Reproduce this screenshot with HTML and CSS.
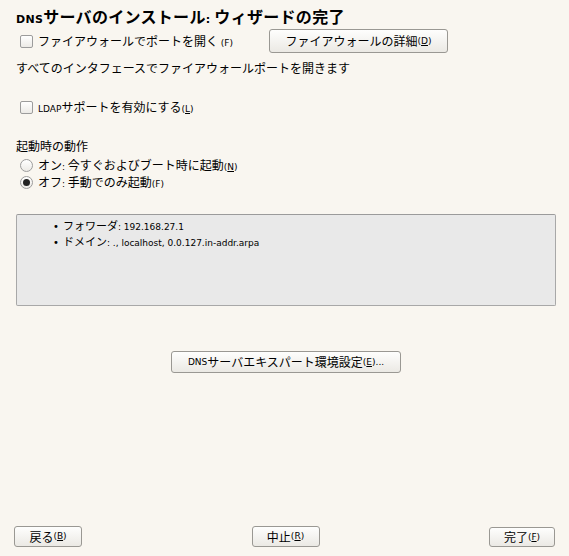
FILE: index.html
```html
<!DOCTYPE html>
<html lang="ja">
<head>
<meta charset="utf-8">
<title>DNSサーバのインストール</title>
<link rel="stylesheet" href="styles.css">
</head>
<body>
<div class="page">
  <h1 class="title"><span class="lat-b">DNS</span>サーバのインストール<span class="lat-b">:</span> ウィザードの完了</h1>

  <div class="row fw-row">
    <label class="check-label">
      <span class="checkbox"></span>
      <span>ファイアウォールでポートを開く <span class="lat">(F)</span></span>
    </label>
    <button class="btn fw-btn">ファイアウォールの詳細 <span class="lat">(<u>D</u>)</span></button>
  </div>

  <p class="note">すべてのインタフェースでファイアウォールポートを開きます</p>

  <label class="check-label ldap">
    <span class="checkbox"></span>
    <span><span class="lat">LDAP</span>サポートを有効にする<span class="lat">(<u>L</u>)</span></span>
  </label>

  <div class="startup">
    <div class="group-title">起動時の動作</div>
    <label class="radio-label">
      <span class="radio"></span>
      <span>オン<span class="lat">:</span> 今すぐおよびブート時に起動<span class="lat">(<u>N</u>)</span></span>
    </label>
    <label class="radio-label">
      <span class="radio checked"></span>
      <span>オフ<span class="lat">:</span> 手動でのみ起動<span class="lat">(F)</span></span>
    </label>
  </div>

  <div class="summary">
    <ul>
      <li>フォワーダ<span class="lat">: 192.168.27.1</span></li>
      <li>ドメイン<span class="lat">: ., localhost, 0.0.127.in-addr.arpa</span></li>
    </ul>
  </div>

  <div class="expert">
    <button class="btn expert-btn"><span class="lat">DNS</span>サーバエキスパート環境設定<span class="lat">(<u>E</u>)...</span></button>
  </div>

  <div class="spacer"></div>

  <div class="bottom">
    <button class="btn nav-btn">戻る<span class="lat">(<u>B</u>)</span></button>
    <button class="btn nav-btn">中止<span class="lat">(<u>R</u>)</span></button>
    <button class="btn nav-btn default">完了<span class="lat">(<u>F</u>)</span></button>
  </div>
</div>
</body>
</html>
```

FILE: styles.css
```css
* { box-sizing: border-box; }

html, body {
  margin: 0;
  padding: 0;
  height: 100%;
}

body {
  background: #f9f6f0;
  color: #000;
  font-family: "Noto Sans CJK JP", "DejaVu Sans", sans-serif;
  font-size: 12px;
  line-height: 14px;
}

.page {
  height: 556px;
  display: flex;
  flex-direction: column;
  padding: 8px 13px 9px 16px;
}

.lat {
  font-family: "DejaVu Sans", sans-serif;
  font-size: 9px;
  line-height: 1;
}

.lat-b {
  font-family: "DejaVu Sans", sans-serif;
  font-size: 11px;
  font-weight: bold;
  line-height: 1;
}

.title {
  margin: 0;
  font-size: 16px;
  line-height: 16px;
  height: 16px;
  font-weight: bold;
  letter-spacing: 0.3px;
  white-space: nowrap;
}

.row {
  display: flex;
  align-items: center;
}

.fw-row {
  margin-top: 5px;
  height: 24px;
}

.check-label, .radio-label {
  display: flex;
  align-items: center;
  gap: 5px;
  padding-left: 4px;
  height: 14px;
}

.fw-row .check-label {
  width: 253px;
}

.checkbox {
  width: 13px;
  height: 13px;
  border: 1px solid #9c9c9c;
  border-radius: 2px;
  background: linear-gradient(#ffffff, #eceae6);
  flex: none;
}

.radio {
  width: 13px;
  height: 13px;
  border: 1px solid #9c9c9c;
  border-radius: 50%;
  background: linear-gradient(#ffffff, #eceae6);
  flex: none;
  display: flex;
  align-items: center;
  justify-content: center;
}

.radio.checked::after {
  content: "";
  width: 7px;
  height: 7px;
  border-radius: 50%;
  background: #222;
}

.btn {
  font: inherit;
  line-height: 14px;
  color: #000;
  border: 1px solid #9a9893;
  border-radius: 3px;
  background: linear-gradient(#fefefd, #ebe9e4);
  padding: 0;
  display: flex;
  align-items: center;
  justify-content: center;
  cursor: default;
}

.fw-btn {
  width: 179px;
  height: 24px;
}

.note {
  margin: 8px 0 0;
  height: 14px;
}

.ldap {
  margin-top: 25px;
}

.startup {
  margin-top: 25px;
  display: flex;
  flex-direction: column;
  gap: 3px;
}

.group-title {
  height: 14px;
  margin-bottom: 2px;
}

.summary {
  margin-top: 25px;
  height: 92px;
  flex: none;
  background: #e9e9e9;
  border: 1px solid #a8a8a8;
  border-top-color: #9b9b9b;
  border-radius: 2px;
  padding-top: 2px;
}

.summary ul {
  margin: 0;
  padding-left: 36px;
  list-style: none;
}

.summary li {
  font-size: 11px;
  line-height: 16px;
  height: 16px;
}

.summary li::before {
  content: "•";
  font-family: "DejaVu Sans", sans-serif;
  font-size: 10px;
  line-height: 1;
  margin-right: 4px;
}

.expert {
  margin-top: 45px;
  display: flex;
  justify-content: center;
}

.expert-btn {
  width: 230px;
  height: 22px;
}

.spacer {
  flex: 1;
}

.bottom {
  display: flex;
  justify-content: space-between;
  align-items: flex-start;
  margin-left: -2px;
  margin-right: 1px;
}

.nav-btn {
  width: 68px;
  height: 21px;
}

.nav-btn.default {
  width: 66px;
  height: 20px;
  margin-top: 1px;
}
```
